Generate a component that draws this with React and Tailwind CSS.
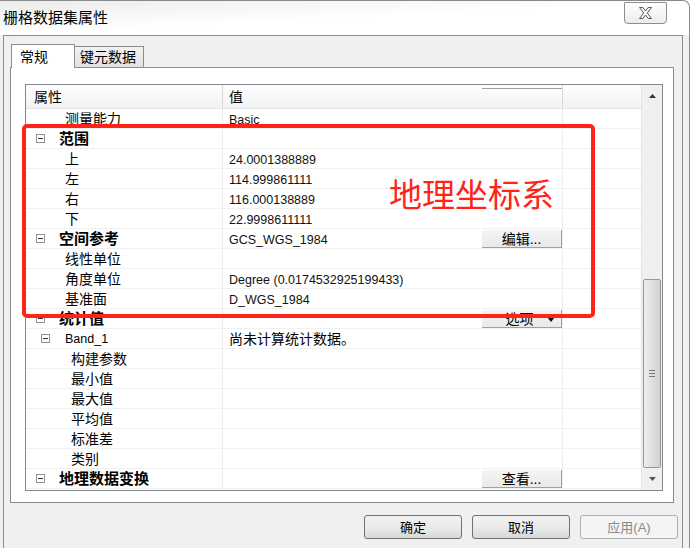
import React from 'react'

const rows = [
  { label: '测量能力', pad: 39, value: 'Basic' },
  { label: '范围', group: true },
  { label: '上', pad: 39, value: '24.0001388889' },
  { label: '左', pad: 39, value: '114.999861111' },
  { label: '右', pad: 39, value: '116.000138889' },
  { label: '下', pad: 39, value: '22.9998611111' },
  { label: '空间参考', group: true, value: 'GCS_WGS_1984', button: '编辑...' },
  { label: '线性单位', pad: 39 },
  { label: '角度单位', pad: 39, value: 'Degree (0.0174532925199433)' },
  { label: '基准面', pad: 39, value: 'D_WGS_1984' },
  { label: '统计值', group: true, button: '选项', dropdown: true },
  { label: 'Band_1', band: true, value: '尚未计算统计数据。' },
  { label: '构建参数', pad: 45 },
  { label: '最小值', pad: 45 },
  { label: '最大值', pad: 45 },
  { label: '平均值', pad: 45 },
  { label: '标准差', pad: 45 },
  { label: '类别', pad: 45 },
  { label: '地理数据变换', group: true, button: '查看...' },
]

function Minus() {
  return (
    <div className="w-[9px] h-[9px] border border-[#919191] bg-white flex items-center justify-center shrink-0">
      <div className="w-[5px] h-px bg-[#333]" />
    </div>
  )
}

function CellButton({ text, dropdown }) {
  return (
    <div className="ml-auto mt-px w-[80px] h-[18px] self-start bg-gradient-to-b from-[#f5f5f5] to-[#e9e9e9] border-r border-b border-[#a0a0a0] flex items-center justify-center relative text-[14px] leading-none text-black">
      <span className={dropdown ? '-ml-[4px]' : ''}>{text}</span>
      {dropdown && (
        <svg className="absolute right-[6px] top-[7px]" width="8" height="5" viewBox="0 0 8 5">
          <path d="M0 0 H8 L4 5 Z" fill="#111" />
        </svg>
      )}
    </div>
  )
}

function Row({ r }) {
  let left
  if (r.group) {
    left = (
      <div className="flex items-center pl-[10px] gap-[14px]">
        <Minus />
        <span className="font-bold text-[15px] leading-none">{r.label}</span>
      </div>
    )
  } else if (r.band) {
    left = (
      <div className="flex items-center pl-[15px] gap-[15px]">
        <Minus />
        <span className="text-[12.5px] leading-none translate-y-px">{r.label}</span>
      </div>
    )
  } else {
    left = (
      <div className="text-[14px] leading-none" style={{ paddingLeft: r.pad }}>
        {r.label}
      </div>
    )
  }
  const cjkValue = r.band
  return (
    <div className="flex h-[20px] border-b border-[#f0f0f0] shrink-0">
      <div className="w-[197px] border-r border-[#ececec] flex items-center">{left}</div>
      <div className="w-[340px] border-r border-[#ececec] flex items-center pl-[6px]">
        {r.value && (
          <span
            className={
              cjkValue
                ? 'text-[14px] leading-none'
                : 'text-[12.5px] leading-none text-[#111] translate-y-[1.5px]'
            }
          >
            {r.value}
          </span>
        )}
        {r.button && <CellButton text={r.button} dropdown={r.dropdown} />}
      </div>
      <div className="flex-1" />
    </div>
  )
}

function Scrollbar() {
  return (
    <div className="w-[21px] flex flex-col bg-[#f0f0f0] border-l border-[#e4e4e4]">
      <div className="h-[22px] flex items-center justify-center">
        <svg width="7" height="4" viewBox="0 0 7 4">
          <path d="M0 4 L3.5 0 L7 4 Z" fill="#333" />
        </svg>
      </div>
      <div className="h-[172px]" />
      <div className="h-[189px] mx-px rounded-[2px] border border-[#979797] bg-gradient-to-r from-[#eeeeee] to-[#d2d2d2] flex flex-col items-center justify-center gap-[2px]">
        <div className="w-[6px] h-px bg-[#777]" />
        <div className="w-[6px] h-px bg-[#777]" />
        <div className="w-[6px] h-px bg-[#777]" />
      </div>
      <div className="flex-1 flex items-center justify-center">
        <svg width="7" height="4" viewBox="0 0 7 4">
          <path d="M0 0 L7 0 L3.5 4 Z" fill="#555" />
        </svg>
      </div>
    </div>
  )
}

function DialogButton({ children, disabled }) {
  return (
    <div
      className={
        'w-[98px] h-[24px] rounded-[3px] border flex items-center justify-center text-[13px] leading-none ' +
        (disabled
          ? 'border-[#adb2b5] bg-[#f4f4f4] text-[#8a8a8a]'
          : 'border-[#707070] bg-gradient-to-b from-[#f2f2f2] via-[#ebebeb] to-[#d9d9d9] text-black')
      }
    >
      {children}
    </div>
  )
}

export default function App() {
  return (
    <div className="relative w-[697px] h-[548px] overflow-hidden bg-white font-['Liberation_Sans','Noto_Sans_CJK_SC',sans-serif] text-black">
      <div className="w-[690px] h-full flex flex-col border-t border-r border-[#8a8a8a] rounded-tr-[7px] bg-[#eef0f2]">
        {/* title bar */}
        <div className="h-[34px] flex items-start bg-gradient-to-br from-[#ececec] via-white to-white rounded-tr-[7px]">
          <div className="pl-[3px] pt-[9px] text-[15px] leading-none">栅格数据集属性</div>
          <div className="ml-auto mr-[22px] mt-[1px] w-[43px] h-[22px] rounded-b-[4px] rounded-t-[1px] border border-[#8d8d8d] bg-gradient-to-b from-white to-[#ececec] flex items-center justify-center">
            <svg width="15" height="12" viewBox="0 0 15 12">
              <path
                d="M1.5 0.5 H4.8 L7.5 4 L10.2 0.5 H13.5 L9.3 6 L13.5 11.5 H10.2 L7.5 8 L4.8 11.5 H1.5 L5.7 6 Z"
                fill="#fafafa"
                stroke="#5a5a5a"
                strokeWidth="1"
              />
            </svg>
          </div>
        </div>

        <div className="flex flex-1">
          {/* client area */}
          <div className="ml-[3px] w-[680px] border-l border-t border-r border-[#8c8c8c] bg-[#f0f0f0] flex flex-col">
            <div className="pt-[8px] pl-[7px] h-[31px] flex items-end">
              <div className="relative z-10 -mb-px h-[24px] w-[64px] bg-white border border-b-0 border-[#898c95] flex items-start pl-[8px] pt-[5px] text-[14px] leading-none">
                常规
              </div>
              <div className="h-[21px] w-[69px] border border-l-0 border-b-0 border-[#898c95] bg-gradient-to-b from-[#f2f2f2] to-[#e3e3e3] flex items-center pl-[5px] text-[14px] leading-none">
                键元数据
              </div>
            </div>

            {/* tab panel */}
            <div className="ml-[6px] w-[664px] h-[436px] bg-white border border-[#898c95] pl-[14px] pt-[16px]">
              <div className="w-[638px] h-[407px] border border-[#828790] flex">
                <div className="flex-1 flex flex-col overflow-hidden">
                  {/* header */}
                  <div className="flex h-[24px] shrink-0 bg-gradient-to-b from-white to-[#f1f2f4] border-b border-[#e3e4e6]">
                    <div className="w-[197px] border-r border-[#d9d9d9] flex items-center pl-[8px] text-[14px] leading-none">
                      属性
                    </div>
                    <div className="w-[340px] border-r border-[#d9d9d9] flex pl-[6px]">
                      <span className="self-center text-[14px] leading-none">值</span>
                      <div className="ml-auto mt-[3px] w-[80px] h-px bg-[#a0a0a0]" />
                    </div>
                    <div className="flex-1" />
                  </div>
                  {rows.map((r) => (
                    <Row key={r.label} r={r} />
                  ))}
                </div>
                <Scrollbar />
              </div>
            </div>

            {/* dialog buttons */}
            <div className="mt-[12px] pr-[4px] flex justify-end gap-[10px]">
              <DialogButton>确定</DialogButton>
              <DialogButton>取消</DialogButton>
              <DialogButton disabled>应用(A)</DialogButton>
            </div>
          </div>
          <div className="flex-1" />
        </div>
      </div>

      {/* annotation overlay */}
      <div className="absolute left-[22px] top-[124px] w-[573px] h-[194px] border-[4px] border-[#ff2318] rounded-[5px]" />
      <div className="absolute left-[389px] top-[177px] text-[33px] leading-none text-[#ff2318] font-['Noto_Sans_CJK_SC',sans-serif]">
        地理坐标系
      </div>
    </div>
  )
}
